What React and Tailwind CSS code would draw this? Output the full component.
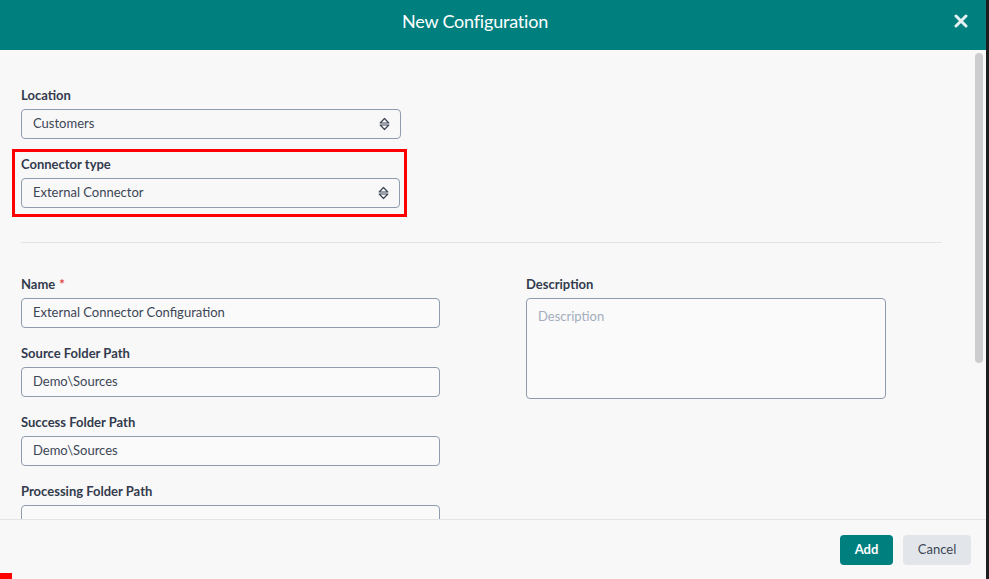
import React from 'react'

const Chevrons = () => (
  <svg width="11" height="14" viewBox="0 0 11 14" fill="none" stroke="#3c4656" strokeWidth="1.2" strokeLinejoin="round">
    <path d="M1.2 6 L5.5 1.5 L9.8 6 Z" />
    <path d="M1.2 8 L5.5 12.5 L9.8 8 Z" />
  </svg>
)

const Label = ({ children, required }) => (
  <div className="text-[13px] font-bold text-[#333b4d] leading-4 mb-[6px]">
    {children}
    {required && <span className="text-[#e53e3e] ml-1">*</span>}
  </div>
)

const Select = ({ value }) => (
  <div className="h-[30px] border border-[#8f9cae] rounded-[4px] bg-[#f8f8f8] flex items-center justify-between pl-[11px] pr-[10px] text-[13px] text-[#3c4656]">
    <span>{value}</span>
    <Chevrons />
  </div>
)

const Input = ({ value }) => (
  <div className="h-[30px] border border-[#8f9cae] rounded-[4px] bg-[#fafafa] flex items-center pl-[11px] text-[13px] text-[#3c4656]">
    {value}
  </div>
)

const Field = ({ label, value, required }) => (
  <div className="mb-[17px]">
    <Label required={required}>{label}</Label>
    <Input value={value} />
  </div>
)

export default function App() {
  return (
    <div className="w-[989px] h-[579px] flex bg-[#1e1e1e] overflow-hidden" style={{ fontFamily: 'Lato, "Liberation Sans", sans-serif' }}>
      <div className="w-[986px] h-full flex flex-col bg-[#f8f8f8] relative">
        <div className="h-[50px] shrink-0 bg-[#007f7f] flex items-start justify-center pt-[11px] relative">
          <span className="text-white text-[18px] leading-5 pr-[36px] tracking-[-0.2px]">New Configuration</span>
          <svg className="absolute right-[18px] top-[14px]" width="14" height="14" viewBox="0 0 14 14" stroke="#e6f2f2" strokeWidth="3" strokeLinecap="round">
            <path d="M2 2 L12 12 M12 2 L2 12" />
          </svg>
        </div>

        <div className="flex-1 flex overflow-hidden">
          <div className="flex-1 overflow-hidden pl-[21px] pt-[37px]">
            <div className="w-[380px]">
              <Label>Location</Label>
              <Select value="Customers" />
            </div>
            <div className="w-[395px] -ml-[9px] mt-[10px] border-[3px] border-[#ff0000] pl-[6px] pr-[4px] pt-[4px] pb-[6px]">
              <Label>Connector type</Label>
              <Select value="External Connector" />
            </div>

            <div className="w-[921px] h-px bg-[#e4e4e4] mt-[25px] mb-[33px]" />

            <div className="flex">
              <div className="w-[419px]">
                <Field label="Name" required value="External Connector Configuration" />
                <Field label="Source Folder Path" value="Demo\Sources" />
                <Field label="Success Folder Path" value="Demo\Sources" />
                <Field label="Processing Folder Path" value="" />
              </div>
              <div className="ml-[86px] w-[360px]">
                <Label>Description</Label>
                <div className="h-[101px] border border-[#8f9cae] rounded-[4px] bg-[#fafafa] pl-[11px] pt-[8px] text-[13px] text-[#a3aebd]">
                  Description
                </div>
              </div>
            </div>
          </div>
          <div className="w-[14px] shrink-0 pt-[3px] pl-[3px]">
            <div className="w-[8px] h-[310px] rounded-full bg-[#cdcdd0]" />
          </div>
        </div>

        <div className="h-[60px] shrink-0 border-t border-[#e4e4e4] flex items-start justify-end pt-[15px] pr-[15px] gap-[10px]">
          <button className="h-[30px] w-[53px] rounded-[4px] bg-[#007f7f] text-white text-[13px] font-bold">Add</button>
          <button className="h-[30px] w-[68px] rounded-[4px] bg-[#e2e6ea] text-[#3c4656] text-[13px]">Cancel</button>
        </div>
        <div className="absolute left-0 bottom-0 w-[12px] h-[6px] bg-[#ff0000]" />
      </div>
    </div>
  )
}
